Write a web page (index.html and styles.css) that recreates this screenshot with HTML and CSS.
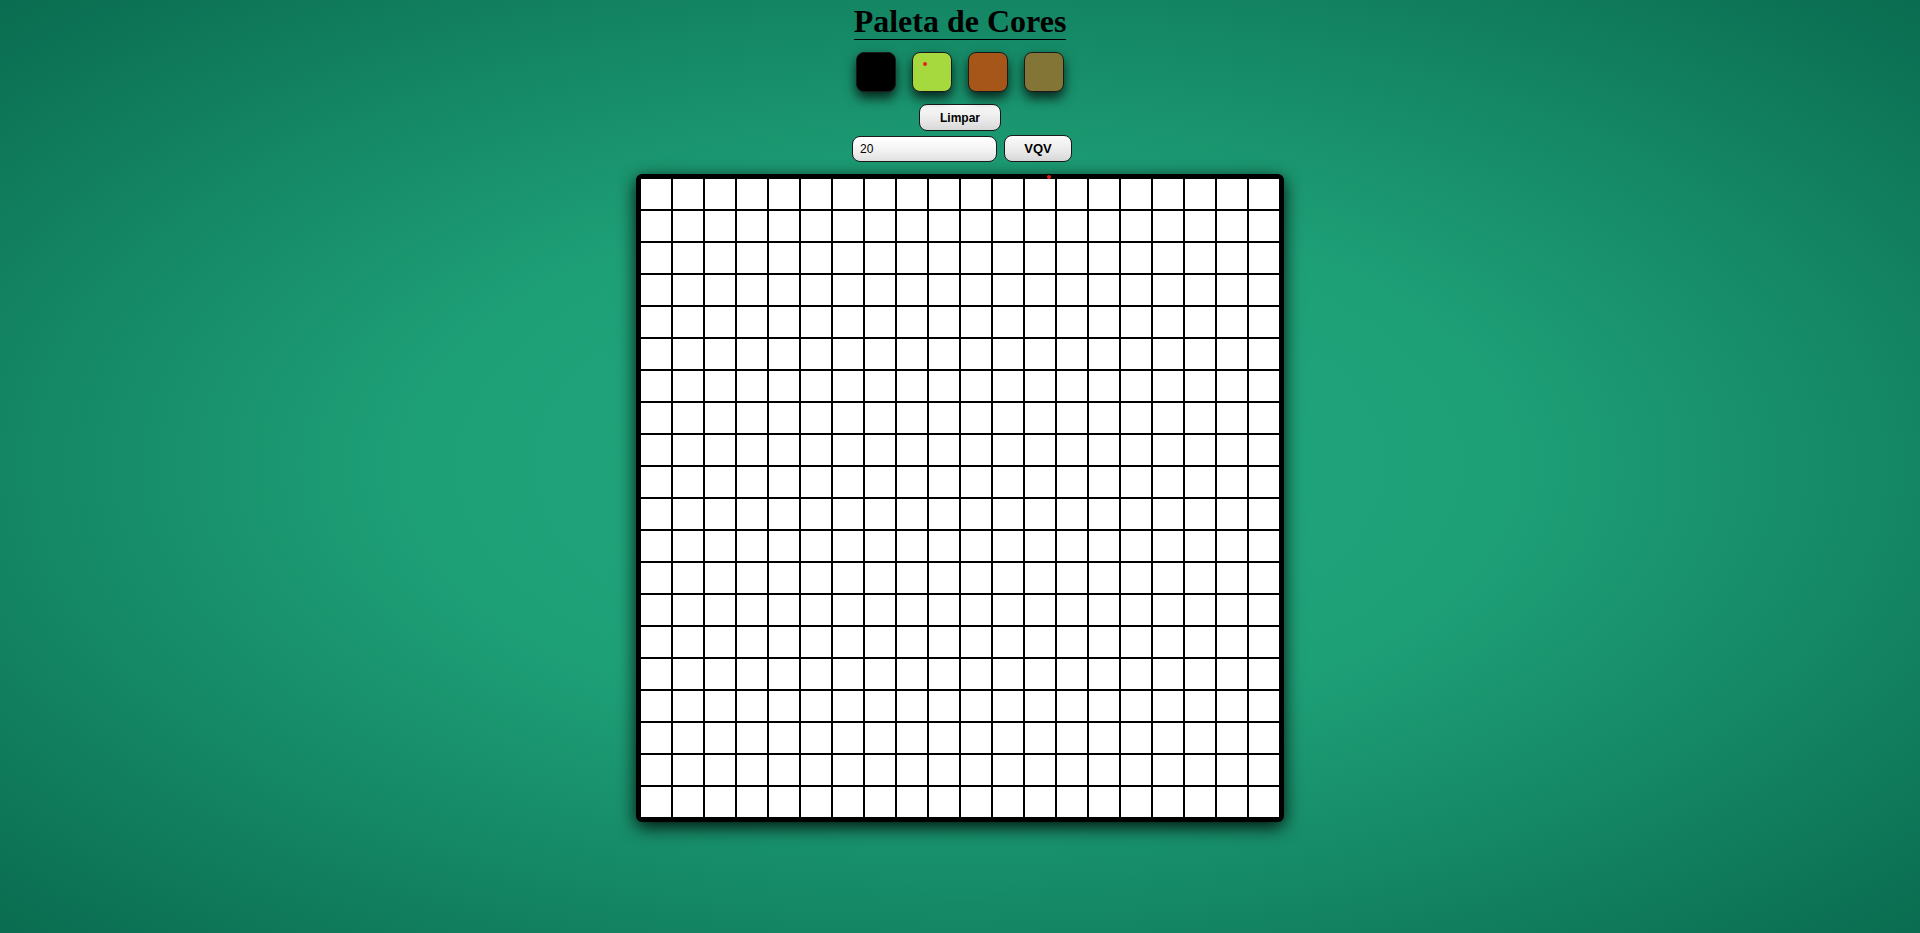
FILE: index.html
```html
<!DOCTYPE html>
<html lang="pt-BR">
<head>
<meta charset="utf-8">
<title>Pixel Art</title>
<link rel="stylesheet" href="styles.css">
</head>
<body>
<main class="app">
  <h1 class="title">Paleta de Cores</h1>
  <div class="palette">
    <div class="color color-black"></div>
    <div class="color color-lime"><span class="dot dot-swatch"></span></div>
    <div class="color color-brown"></div>
    <div class="color color-olive"></div>
  </div>
  <button class="btn btn-clear" type="button">Limpar</button>
  <div class="size-row">
    <input class="size-input" type="text" value="20">
    <button class="btn btn-vqv" type="button">VQV</button>
  </div>
  <div class="board" id="board"><span class="dot dot-board"></span></div>
</main>
<script src="script.js"></script>
</body>
</html>
```

FILE: styles.css
```css
html, body {
  margin: 0;
  padding: 0;
}

body {
  min-height: 100vh;
  background: radial-gradient(ellipse at center, #21a77d 0%, #1ea077 40%, #0a6c50 100%);
  font-family: "Liberation Sans", Arial, sans-serif;
}

.app {
  display: flex;
  flex-direction: column;
  align-items: center;
  padding-top: 4px;
}

.title {
  margin: 0;
  font-family: "Liberation Serif", "Times New Roman", serif;
  font-weight: bold;
  font-size: 32px;
  line-height: 35px;
  color: #000;
  border-bottom: 1px solid #000;
}

.palette {
  display: flex;
  gap: 16px;
  margin-top: 12px;
}

.color {
  position: relative;
  width: 40px;
  height: 40px;
  box-sizing: border-box;
  border: 1px solid #1a1a1a;
  border-radius: 8px;
  box-shadow: 0 6px 12px rgba(0, 0, 0, 0.75);
}

.color-black { background: #000; }
.color-lime { background: #a6d93d; }
.color-brown { background: #a7561a; }
.color-olive { background: #837536; }

.dot {
  position: absolute;
  width: 4px;
  height: 4px;
  border-radius: 50%;
  background: #e8201c;
}

.dot-swatch {
  left: 10px;
  top: 9px;
}

.dot-board {
  left: 407px;
  top: -3px;
  z-index: 2;
}

.btn {
  box-sizing: border-box;
  border: 1px solid #1a1a1a;
  border-radius: 8px;
  background: linear-gradient(#fbfbfb, #e9e9e9 60%, #d8d8d8);
  font-family: "Liberation Sans", Arial, sans-serif;
  font-weight: bold;
  font-size: 12px;
  color: #000;
  padding: 0;
}

.btn-clear {
  width: 82px;
  height: 27px;
  margin-top: 12px;
}

.size-row {
  display: flex;
  gap: 7px;
  margin-top: 4px;
  margin-left: 4px;
}

.size-input {
  box-sizing: border-box;
  width: 145px;
  height: 26px;
  margin-top: 1px;
  border: 1px solid #1a1a1a;
  border-radius: 8px;
  padding: 0 7px;
  background: linear-gradient(#ffffff, #f4f4f4 50%, #e2e2e2);
  font-family: "Liberation Sans", Arial, sans-serif;
  font-size: 12px;
  color: #000;
  outline: none;
}

.btn-vqv {
  width: 68px;
  height: 27px;
  font-size: 13px;
}

.board {
  position: relative;
  display: grid;
  grid-template-columns: repeat(20, 32px);
  grid-auto-rows: 32px;
  border: 4px solid #000;
  border-radius: 6px;
  background: #fff;
  margin-top: 12px;
  box-shadow: 0 5px 18px rgba(0, 0, 0, 0.9);
}

.pixel {
  box-sizing: border-box;
  border: 1px solid #000;
  background: #fff;
}
```

FILE: script.js
```js
var board = document.getElementById('board');
for (var i = 0; i < 400; i++) {
  var cell = document.createElement('div');
  cell.className = 'pixel';
  board.appendChild(cell);
}
```
